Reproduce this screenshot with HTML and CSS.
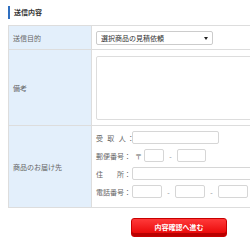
FILE: index.html
```html
<!DOCTYPE html>
<html lang="ja">
<head>
    <meta charset="UTF-8">
    <meta name="viewport" content="width=device-width, initial-scale=1.0">
    <title>送信内容</title>
    <link rel="stylesheet" href="styles.css">
</head>
<body>
    <div class="page">
        <h2 class="section-title">送信内容</h2>

        <table class="form-table">
            <tr class="row-purpose">
                <th>送信目的</th>
                <td>
                    <div class="select-wrap">
                        <select>
                            <option>選択商品の見積依頼</option>
                        </select>
                    </div>
                </td>
            </tr>
            <tr class="row-note">
                <th>備考</th>
                <td><textarea></textarea></td>
            </tr>
            <tr class="row-address">
                <th>商品のお届け先</th>
                <td>
                    <div class="field">
                        <span class="field-label spread">受 取 人：</span>
                        <input type="text" class="w-name">
                    </div>
                    <div class="field">
                        <span class="field-label">郵便番号：</span>
                        <span class="zip-mark">〒</span>
                        <input type="text" class="w-zip1">
                        <span class="dash">-</span>
                        <input type="text" class="w-zip2">
                    </div>
                    <div class="field">
                        <span class="field-label">住　　所：</span>
                        <input type="text" class="w-addr">
                    </div>
                    <div class="field">
                        <span class="field-label">電話番号：</span>
                        <input type="text" class="w-tel">
                        <span class="dash">-</span>
                        <input type="text" class="w-tel">
                        <span class="dash">-</span>
                        <input type="text" class="w-tel">
                    </div>
                </td>
            </tr>
        </table>

        <div class="actions">
            <button class="btn-confirm">内容確認へ進む</button>
        </div>
    </div>
</body>
</html>
```

FILE: styles.css
```css
html, body {
    margin: 0;
    padding: 0;
    overflow: hidden;
    background: #fff;
}

body {
    font-family: "Noto Sans CJK JP", "Noto Sans", sans-serif;
    font-size: 7px;
    color: #555;
}

.page {
    width: 340px;
    padding: 6px 0 0 8px;
}

/* heading with blue bar */
.section-title {
    margin: 0 0 6px 0;
    padding-left: 4px;
    border-left: 2px solid #2f6fc0;
    font-size: 7px;
    font-weight: bold;
    line-height: 13px;
    color: #333;
}

.form-table {
    border-collapse: collapse;
    width: 330px;
}
.form-table th,
.form-table td {
    border-top: 1px solid #ddd;
    border-bottom: 1px solid #ddd;
    padding: 0;
}
.form-table th {
    width: 78px;
    padding-left: 4px;
    background: #e3effb;
    border-left: 1px solid #ddd;
    border-right: 1px solid #ddd;
    text-align: left;
    font-weight: normal;
    color: #666;
}
.form-table td {
    padding-left: 4px;
}

.row-purpose th, .row-purpose td { height: 23px; }
.row-note th, .row-note td { height: 75px; }
.row-address td {
    padding-top: 5px;
    padding-bottom: 9px;
}

/* select */
.select-wrap {
    position: relative;
    width: 117px;
}
.select-wrap::after {
    content: "";
    position: absolute;
    right: 5px;
    top: 6px;
    border-left: 2px solid transparent;
    border-right: 2px solid transparent;
    border-top: 3px solid #222;
}
.select-wrap select {
    appearance: none;
    -webkit-appearance: none;
    width: 117px;
    height: 14px;
    padding: 0 0 0 4px;
    border: 1px solid #ccc;
    border-radius: 2px;
    background: #fff;
    font-family: inherit;
    font-size: 7px;
    color: #333;
}

textarea {
    display: block;
    width: 180px;
    height: 62px;
    margin: 0;
    padding: 0;
    border: 1px solid #ddd;
    border-radius: 2px;
    resize: none;
}

/* address rows */
.field {
    display: flex;
    align-items: center;
    height: 13px;
    margin-bottom: 5px;
}
.field:last-child {
    margin-bottom: 0;
}
.field-label {
    width: 36px;
    flex: none;
    white-space: nowrap;
    color: #666;
}
.field-label.spread {
    letter-spacing: 1.4px;
}
.zip-mark {
    width: 12px;
    padding-left: 3px;
    box-sizing: border-box;
    color: #666;
}
.dash {
    width: 13px;
    text-align: center;
    color: #888;
}

.field input {
    height: 13px;
    box-sizing: border-box;
    margin: 0;
    padding: 0;
    border: 1px solid #d6d6d6;
    border-radius: 2px;
    background: #fff;
}
.w-name { width: 87px; }
.w-zip1 { width: 20px; }
.w-zip2 { width: 29px; }
.w-addr { width: 140px; }
.w-tel { width: 30px; }

/* red button */
.actions {
    padding: 10px 0 0 123px;
}
.btn-confirm {
    width: 96px;
    height: 19px;
    padding: 0 0 2px 0;
    border: 1px solid #c80000;
    border-radius: 3px;
    background: linear-gradient(#ff3a3a, #e60000);
    box-shadow: inset 0 -3px 0 #b80000;
    font-family: inherit;
    font-size: 7px;
    font-weight: bold;
    color: #fff;
}
```
